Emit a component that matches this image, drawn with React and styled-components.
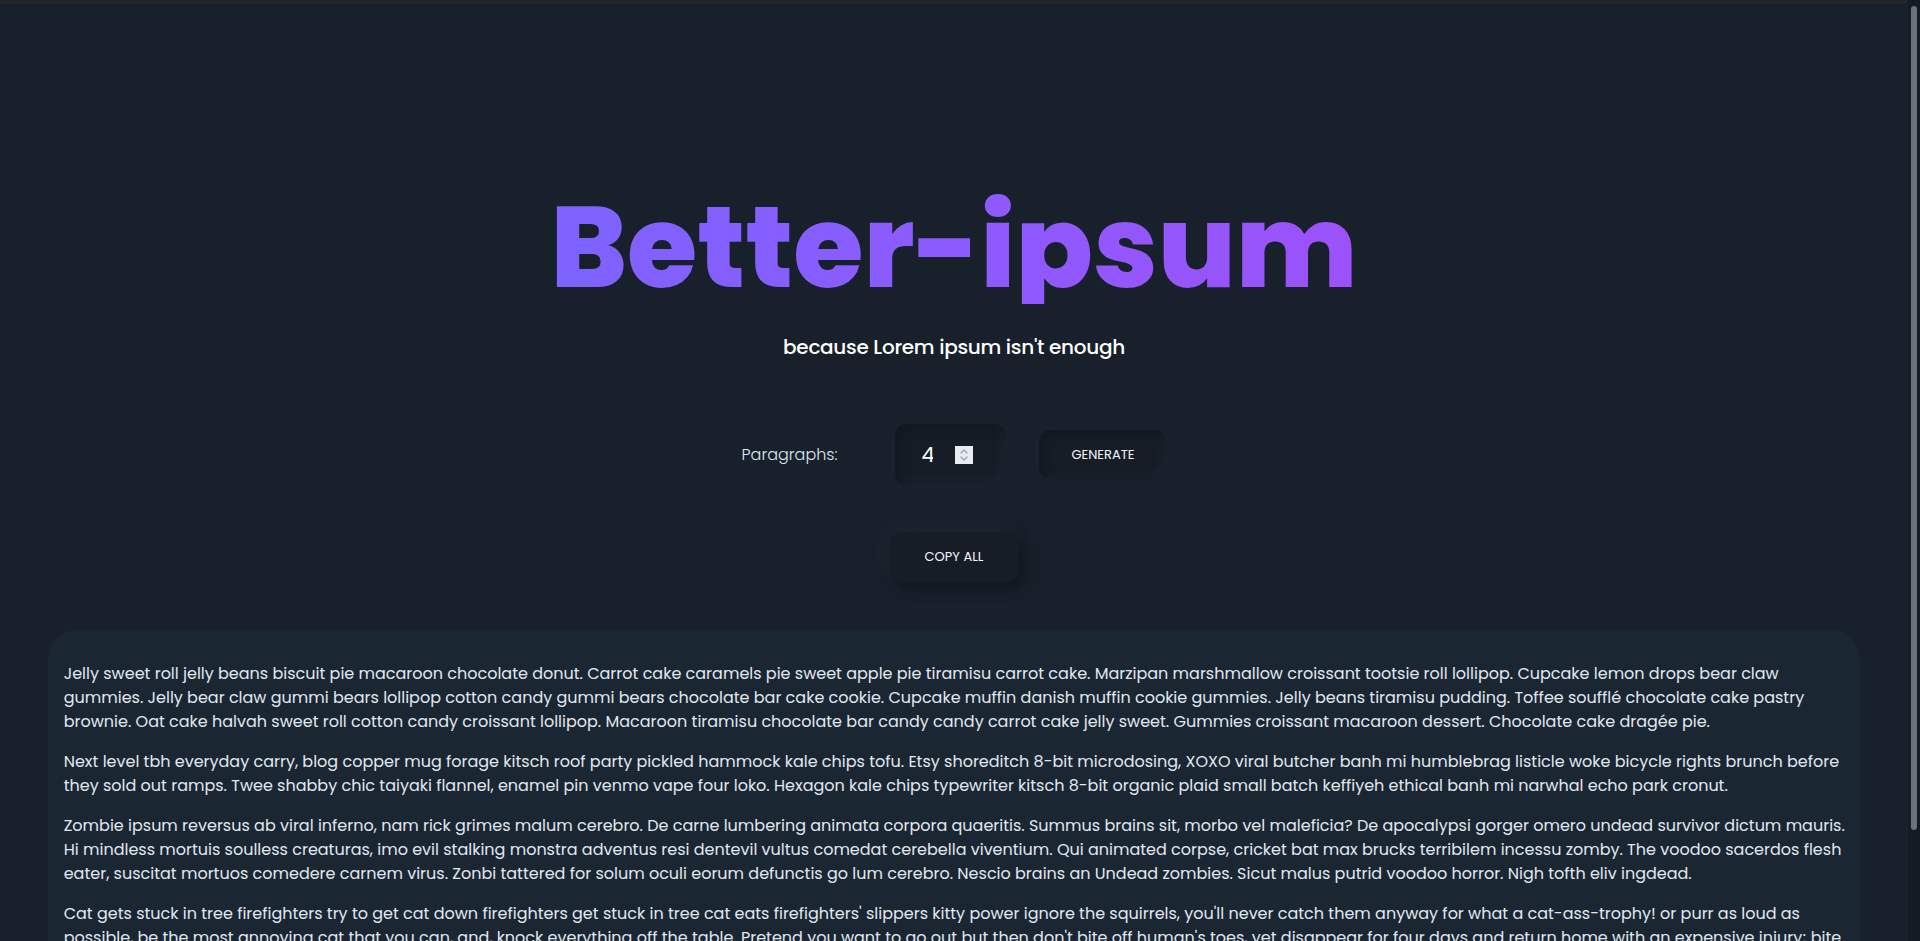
import React, { useState } from 'react';
import styled, { createGlobalStyle } from 'styled-components';

const GlobalStyle = createGlobalStyle`
  html {
    background-color: #18202b;
  }
  body {
    margin: 0;
    background-color: #18202b;
    font-family: 'Poppins', 'Inter', 'DejaVu Sans', sans-serif;
    color: #e1e8ef;
  }
`

const TopShade = styled.div`
  height: 4px;
  background-color: #232425;
`

const ScrollRail = styled.div`
  position: fixed;
  top: 0;
  right: 0;
  width: 12px;
  height: 100vh;
  background-color: #151b24;
`

const ScrollThumb = styled.div`
  margin: 6px 0 0 3px;
  width: 6px;
  height: 824px;
  border-radius: 3px;
  background-color: #6b717d;
`

const Page = styled.main`
  display: flex;
  flex-direction: column;
  align-items: center;
  margin-right: 12px;
  padding-bottom: 70px;
`

const Header = styled.header`
  display: flex;
  flex-direction: column;
  align-items: center;
  padding-top: 186px;
`

const Title = styled.h1`
  margin: 0;
  font-family: 'Poppins', 'Inter', sans-serif;
  font-weight: 800;
  font-size: 114px;
  line-height: 1;
  background: linear-gradient(90deg, #7d63ff 0%, #9c52fb 100%);
  -webkit-background-clip: text;
  background-clip: text;
  color: transparent;
`

const Subtitle = styled.p`
  margin: 28px 0 0;
  font-size: 20px;
  font-weight: 500;
  letter-spacing: -0.3px;
  color: #ffffff;
`

const Controls = styled.div`
  display: flex;
  align-items: center;
  margin-top: 62px;
`

const Label = styled.label`
  font-size: 16px;
  font-weight: 300;
  color: #dde8f2;
  margin-right: 58px;
`

const NumberBox = styled.div`
  display: flex;
  align-items: center;
  gap: 22px;
  width: 111px;
  height: 61px;
  box-sizing: border-box;
  padding-left: 26px;
  border-radius: 12px;
  background-color: #161d27;
  box-shadow: inset 6px 6px 10px #121821, inset -6px -6px 10px #1a222e;
`

const NumberInput = styled.input`
  width: 12px;
  padding: 0;
  border: none;
  outline: none;
  background: transparent;
  color: #ffffff;
  font-family: 'Poppins', 'Inter', sans-serif;
  font-size: 21px;
  font-weight: 400;
  -moz-appearance: textfield;
  &::-webkit-inner-spin-button,
  &::-webkit-outer-spin-button {
    -webkit-appearance: none;
    margin: 0;
  }
`

const Spinner = styled.div`
  width: 18px;
  height: 18px;
  background-color: #e8ecef;
  display: flex;
  align-items: center;
  justify-content: center;
`

const Button = styled.button`
  font-family: 'Poppins', 'Inter', sans-serif;
  font-size: 13px;
  font-weight: 400;
  color: #f2f6fa;
  text-transform: uppercase;
  border: none;
  cursor: pointer;
  border-radius: 12px;
  background-color: #161d27;
  height: ${(props) => props.tall ? '50px' : '49px'};
  padding: ${(props) => props.tall ? '0 35px' : '0 32px'};
  box-shadow: ${(props) => props.raised
    ? '7px 7px 14px #11171f, -7px -7px 14px #1c2531'
    : 'inset 5px 5px 9px #121821, inset -5px -5px 9px #1a222e'};
`

const GenerateButton = styled(Button)`
  margin-left: 33px;
`

const CopyRow = styled.div`
  margin-top: 47px;
`

const Card = styled.section`
  width: 95%;
  margin-top: 48px;
  padding: 16px 4px 16px 16px;
  box-sizing: border-box;
  border-radius: 30px;
  background-color: #1b2633;
`

const Paragraph = styled.p`
  margin: 16px 0;
  font-size: 16px;
  line-height: 24px;
  font-weight: 400;
  color: #e1e8ef;
`

const texts = [
  "Jelly sweet roll jelly beans biscuit pie macaroon chocolate donut. Carrot cake caramels pie sweet apple pie tiramisu carrot cake. Marzipan marshmallow croissant tootsie roll lollipop. Cupcake lemon drops bear claw gummies. Jelly bear claw gummi bears lollipop cotton candy gummi bears chocolate bar cake cookie. Cupcake muffin danish muffin cookie gummies. Jelly beans tiramisu pudding. Toffee soufflé chocolate cake pastry brownie. Oat cake halvah sweet roll cotton candy croissant lollipop. Macaroon tiramisu chocolate bar candy candy carrot cake jelly sweet. Gummies croissant macaroon dessert. Chocolate cake dragée pie.",
  "Next level tbh everyday carry, blog copper mug forage kitsch roof party pickled hammock kale chips tofu. Etsy shoreditch 8-bit microdosing, XOXO viral butcher banh mi humblebrag listicle woke bicycle rights brunch before they sold out ramps. Twee shabby chic taiyaki flannel, enamel pin venmo vape four loko. Hexagon kale chips typewriter kitsch 8-bit organic plaid small batch keffiyeh ethical banh mi narwhal echo park cronut.",
  "Zombie ipsum reversus ab viral inferno, nam rick grimes malum cerebro. De carne lumbering animata corpora quaeritis. Summus brains sit, morbo vel maleficia? De apocalypsi gorger omero undead survivor dictum mauris. Hi mindless mortuis soulless creaturas, imo evil stalking monstra adventus resi dentevil vultus comedat cerebella viventium. Qui animated corpse, cricket bat max brucks terribilem incessu zomby. The voodoo sacerdos flesh eater, suscitat mortuos comedere carnem virus. Zonbi tattered for solum oculi eorum defunctis go lum cerebro. Nescio brains an Undead zombies. Sicut malus putrid voodoo horror. Nigh tofth eliv ingdead.",
  "Cat gets stuck in tree firefighters try to get cat down firefighters get stuck in tree cat eats firefighters' slippers kitty power ignore the squirrels, you'll never catch them anyway for what a cat-ass-trophy! or purr as loud as possible, be the most annoying cat that you can, and, knock everything off the table. Pretend you want to go out but then don't bite off human's toes, yet disappear for four days and return home with an expensive injury; bite the vet. Sit in a box for hours kitty kitty pussy cat doll, yet scratch at the door then walk away."
]

const SpinIcon = () => (
  <svg width="10" height="14" viewBox="0 0 10 14" fill="none" stroke="#8da3b6" strokeWidth="1.3" strokeLinecap="round" strokeLinejoin="round">
    <path d="M2 5 L5 2 L8 5" />
    <path d="M2 9 L5 12 L8 9" />
  </svg>
)

const App = () => {
  const [count, setCount] = useState(4)

  return (
    <>
      <GlobalStyle />
      <TopShade />
      <Page>
        <Header>
          <Title>Better-ipsum</Title>
          <Subtitle>because Lorem ipsum isn't enough</Subtitle>
        </Header>
        <Controls>
          <Label htmlFor="paragraphs">Paragraphs:</Label>
          <NumberBox>
            <NumberInput
              id="paragraphs"
              type="number"
              value={count}
              onChange={(e) => setCount(e.target.value)}
            />
            <Spinner><SpinIcon /></Spinner>
          </NumberBox>
          <GenerateButton>Generate</GenerateButton>
        </Controls>
        <CopyRow>
          <Button tall raised>Copy all</Button>
        </CopyRow>
        <Card>
          {texts.map((t, i) => <Paragraph key={i}>{t}</Paragraph>)}
        </Card>
      </Page>
      <ScrollRail><ScrollThumb /></ScrollRail>
    </>
  )
}

export default App;
